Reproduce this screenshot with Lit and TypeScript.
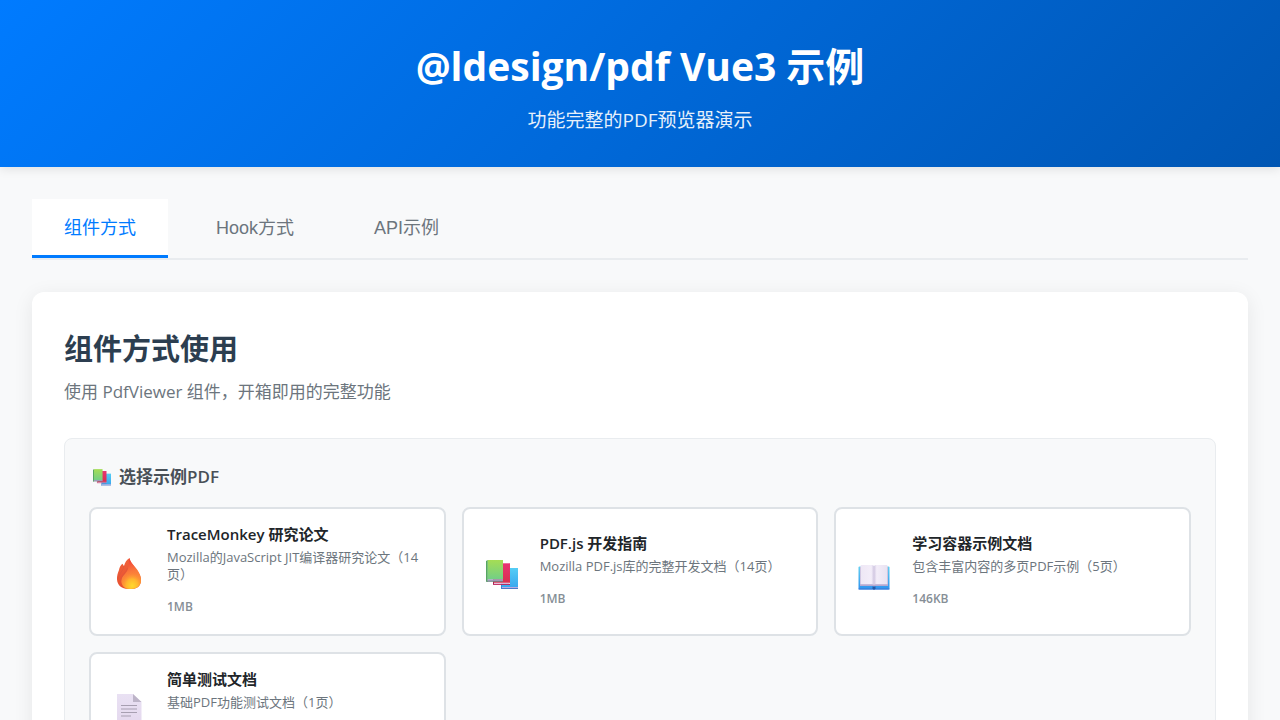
import { LitElement, html, css, svg } from "lit";
import { customElement, property, state } from "lit/decorators.js";

type IconName = "fire" | "books" | "open-book" | "page";

interface Sample {
  icon: IconName;
  title: string;
  desc: string;
  size: string;
}

const SAMPLES: Sample[] = [
  { icon: "fire", title: "TraceMonkey 研究论文", desc: "Mozilla的JavaScript JIT编译器研究论文（14页）", size: "1MB" },
  { icon: "books", title: "PDF.js 开发指南", desc: "Mozilla PDF.js库的完整开发文档（14页）", size: "1MB" },
  { icon: "open-book", title: "学习容器示例文档", desc: "包含丰富内容的多页PDF示例（5页）", size: "146KB" },
  { icon: "page", title: "简单测试文档", desc: "基础PDF功能测试文档（1页）", size: "14KB" },
];

const TABS = ["组件方式", "Hook方式", "API示例"];

const SHAPES = {
  fire: svg`
    <defs>
      <linearGradient id="back" x1="0" y1="0" x2="0" y2="1">
        <stop offset="0" stop-color="#f0623a"/><stop offset="1" stop-color="#e8502f"/>
      </linearGradient>
      <linearGradient id="flame" x1="0.4" y1="0" x2="0.55" y2="1">
        <stop offset="0" stop-color="#f03a3c"/><stop offset="0.45" stop-color="#fa7a3a"/><stop offset="1" stop-color="#ff9a34"/>
      </linearGradient>
      <radialGradient id="glow" cx="0.55" cy="0.85" r="0.65">
        <stop offset="0" stop-color="#ffd92e"/><stop offset="0.5" stop-color="#ffb52e"/><stop offset="1" stop-color="#ff8436" stop-opacity="0"/>
      </radialGradient>
    </defs>
    <path fill="url(#back)" d="M6 12c.5-2.800 1.800-5 3.600-6.200.3 1 .8 1.800 1.400 2.200C12 4.500 13.600 1.600 16.500 0c.5 3.500 3 6 5.500 9.500 3.600 5 6.400 8.500 6 13.500-.4 5-4 8-10 8h-3C9 31 4.500 27.500 4 21.500c-.2-3.500.8-6.500 2-9.500z"/>
    <path fill="url(#flame)" d="M16.500 0c.5 3.500 3 6 5.500 9 3.500 4 6.300 8.500 6 14-.3 5-4 8-11 8-5 0-8.500-3-8.700-8-.2-5 5.200-7 6.700-12 1-3.500.7-7.500 1.500-11z"/>
    <path fill="none" stroke="#d9573d" stroke-width=".8" opacity=".7" d="M11 8c-.4 4.500-5 7-6 13M14.500 10c-1 4.500-6.500 7.500-6.800 13"/>
    <path fill="url(#glow)" d="M21 10c4 4 7 8.500 6.600 13.500C27.200 28 23.500 31 17.500 31c-5.500 0-8.500-3-8.500-7.500C9 17 17 16 21 10z"/>`,
  books: svg`
    <defs>
      <linearGradient id="green" x1="0" y1="0" x2="0" y2="1">
        <stop offset="0" stop-color="#a5dd54"/><stop offset="1" stop-color="#72cf86"/>
      </linearGradient>
      <linearGradient id="red" x1="0" y1="0" x2="0" y2="1">
        <stop offset="0" stop-color="#e83374"/><stop offset="1" stop-color="#d92f4c"/>
      </linearGradient>
      <linearGradient id="blue" x1="0" y1="0" x2="0" y2="1">
        <stop offset="0" stop-color="#55cdf5"/><stop offset="1" stop-color="#38a7ee"/>
      </linearGradient>
    </defs>
    <path fill="#3187d5" d="M15 10.500l1-.5v21h-1z"/>
    <path fill="url(#blue)" d="M16 10h16v19.500H16z"/>
    <path fill="#b8aae0" d="M16 29h16v1H16z"/><path fill="#4c79c9" d="M15 30h17v1H15z"/>
    <path fill="#a9284f" d="M7 6l1-.7V26H7z"/>
    <path fill="url(#red)" d="M8 5.300h16V25H8z"/>
    <path fill="#eacbe5" d="M8 24.700h16v1.200H8z"/><path fill="#bd225a" d="M7 25.900h17v1H7z"/>
    <path fill="#56a661" d="M0 3l1.800-1v21.800H0z"/>
    <path fill="url(#green)" d="M1.800 2H17v19.500H1.800z"/>
    <path fill="#aaa1c6" d="M1.500 21.300H17v2H1.500z"/><path fill="#64817c" d="M.500 22.800H17v.9H.5z"/>`,
  "open-book": svg`
    <defs>
      <linearGradient id="cover" x1="0" y1="0" x2="0" y2="1">
        <stop offset="0" stop-color="#62cff2"/><stop offset="1" stop-color="#2f93ee"/>
      </linearGradient>
      <linearGradient id="left" x1="0" y1="0" x2="1" y2="0">
        <stop offset="0" stop-color="#eee7f5"/><stop offset=".8" stop-color="#f3edf9"/><stop offset="1" stop-color="#d2c8e2"/>
      </linearGradient>
      <linearGradient id="right" x1="0" y1="0" x2="1" y2="0">
        <stop offset="0" stop-color="#d2c8e2"/><stop offset=".2" stop-color="#f3edf9"/><stop offset="1" stop-color="#e9e2f1"/>
      </linearGradient>
    </defs>
    <rect x=".5" y="8.500" width="31" height="23" rx="1" fill="url(#cover)"/>
    <path fill="#3f74d5" d="M.500 30.500h31v1H.5z"/>
    <path fill="#b5a8d0" d="M2 9h28v19H17l-1 1-1-1H2z"/>
    <path fill="url(#left)" d="M2.500 8q0-1 1-1H14q2 0 2 1.500V27q-.5-.8-2-.8H2.500z"/>
    <path fill="url(#right)" d="M29.500 8q0-1-1-1H18q-2 0-2 1.500V27q.5-.8 2-.8h11.500z"/>
    <path fill="#2458a6" d="M14.500 28.500h3v2l-1.500 1.500-1.500-1.500z"/>`,
  page: svg`
    <defs>
      <linearGradient id="sheet" x1="0" y1="0" x2="0" y2="1">
        <stop offset="0" stop-color="#e9e1f3"/><stop offset="1" stop-color="#e4d8ee"/>
      </linearGradient>
    </defs>
    <path fill="url(#sheet)" d="M4 0h16l8.500 8v23H4z"/>
    <path fill="#bdb4c8" d="M20 0l8.500 8H20z"/>
    <path stroke="#a79fb1" stroke-width="1.200" d="M8 11.500h16M8 15h16M8 18.500h16M8 22h10"/>`,
};

@customElement("emoji-icon")
class EmojiIcon extends LitElement {
  @property() name: IconName = "books";

  static styles = css`
    :host { display: block; width: 32px; height: 32px; }
    .art { display: block; width: 100%; height: 100%; }
  `;

  render() {
    return html`<svg class="art" viewBox="0 0 32 32" aria-hidden="true">${SHAPES[this.name]}</svg>`;
  }
}

@customElement("app-root")
class AppRoot extends LitElement {
  @state() private tab = 0;

  static styles = css`
    :host {
      display: block;
      min-height: 100vh;
      background: #f8f9fa;
      color: #212529;
      font-family: "Open Sans", "Noto Sans CJK SC", sans-serif;
    }
    * { box-sizing: border-box; }
    h1, h2, h3, p { margin: 0; }
    .header {
      padding: 32px;
      text-align: center;
      color: #fff;
      background: linear-gradient(135deg, #007bff 0%, #0056b3 100%);
      box-shadow: 0 2px 10px rgba(0, 0, 0, 0.1);
    }
    .title { font-size: 39px; line-height: 68px; font-weight: 700; margin-bottom: 6px; }
    .tagline { font-size: 19px; line-height: 29px; opacity: 0.9; }
    .main { max-width: 1400px; margin: 0 auto; padding: 32px; }
    .tabs { display: flex; gap: 16px; border-bottom: 2px solid #e9ecef; margin-bottom: 32px; }
    .tab {
      padding: 17px 32px 15px;
      border: 0;
      border-bottom: 3px solid transparent;
      background: none;
      color: #6c757d;
      font-family: "Liberation Sans", "Noto Sans CJK SC", sans-serif;
      font-size: 18px;
      line-height: 24px;
      cursor: pointer;
    }
    .tab.active { color: #007bff; background: #fff; border-bottom-color: #007bff; }
    .panel {
      padding: 32px;
      background: #fff;
      border-radius: 12px;
      box-shadow: 0 4px 20px rgba(0, 0, 0, 0.08);
    }
    .heading { font-size: 29px; line-height: 50px; font-weight: 700; color: #2c3e50; margin-bottom: 4px; }
    .intro { font-size: 17px; line-height: 28px; color: #6c757d; margin-bottom: 32px; }
    .picker { padding: 24px; background: #f8f9fa; border: 1px solid #e9ecef; border-radius: 8px; }
    .picker-title {
      display: flex;
      align-items: center;
      gap: 8px;
      padding-left: 4px;
      margin-bottom: 16px;
      font-size: 17px;
      line-height: 28px;
      font-weight: 600;
      color: #495057;
    }
    .mini { width: 18px; height: 18px; }
    .grid { display: grid; grid-template-columns: repeat(auto-fill, minmax(300px, 1fr)); gap: 16px; }
    .card {
      display: flex;
      align-items: center;
      gap: 16px;
      padding: 16px;
      border: 2px solid #dee2e6;
      border-radius: 8px;
      background: #fff;
      color: inherit;
      font-family: inherit;
      text-align: left;
      cursor: pointer;
    }
    .icon { flex: none; display: flex; justify-content: center; width: 44px; padding-top: 4px; }
    .info { flex: 1; min-width: 0; display: flex; flex-direction: column; }
    .name { font-size: 15px; line-height: 18px; font-weight: 600; margin-bottom: 6px; }
    .desc { font-size: 13px; line-height: 17px; color: #6c757d; margin-bottom: 12px; }
    .size { font-size: 12px; line-height: 23px; font-weight: 600; color: #868e96; }
  `;

  render() {
    return html`
      <header class="header">
        <h1 class="title">@ldesign/pdf Vue3 示例</h1>
        <p class="tagline">功能完整的PDF预览器演示</p>
      </header>
      <main class="main">
        <nav class="tabs">
          ${TABS.map(
            (label, i) => html`<button class="tab ${i === this.tab ? "active" : ""}" @click=${() => (this.tab = i)}>${label}</button>`
          )}
        </nav>
        <section class="panel">
          <h2 class="heading">组件方式使用</h2>
          <p class="intro">使用 PdfViewer 组件，开箱即用的完整功能</p>
          <div class="picker">
            <h3 class="picker-title"><emoji-icon class="mini" name="books"></emoji-icon>选择示例PDF</h3>
            <div class="grid">
              ${SAMPLES.map(
                (s) => html`
                  <button class="card">
                    <span class="icon"><emoji-icon name=${s.icon}></emoji-icon></span>
                    <span class="info">
                      <span class="name">${s.title}</span>
                      <span class="desc">${s.desc}</span>
                      <span class="size">${s.size}</span>
                    </span>
                  </button>
                `
              )}
            </div>
          </div>
        </section>
      </main>
    `;
  }
}
